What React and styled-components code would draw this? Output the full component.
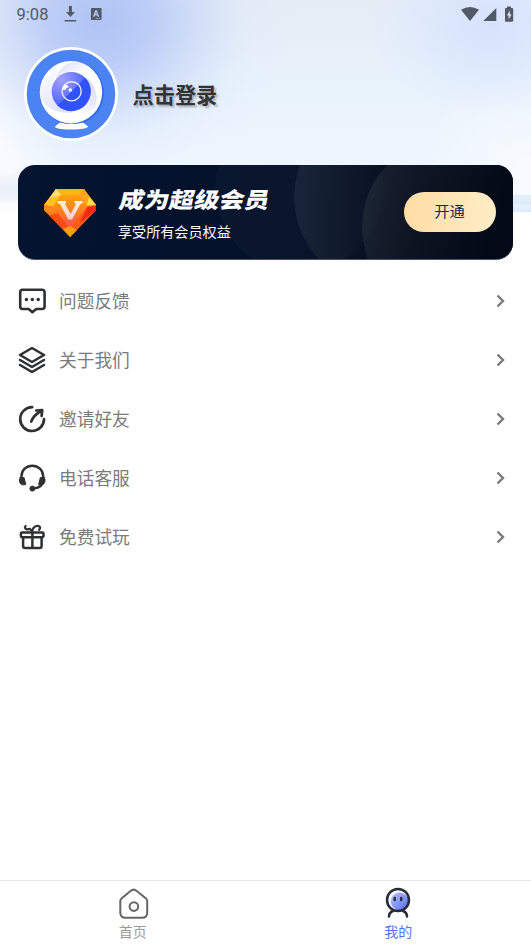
import React from "react";
import styled, { createGlobalStyle } from "styled-components";

const GlobalStyle = createGlobalStyle`
  * { box-sizing: border-box; }
  body {
    margin: 0;
    background: #fff;
    font-family: "Noto Sans CJK SC", "Noto Sans", sans-serif;
  }
`;

const Screen = styled.div`
  width: 531px;
  height: 944px;
  display: flex;
  flex-direction: column;
  overflow: hidden;
  background-color: #fff;
  background-repeat: no-repeat;
  background-position: 0 0, 513px 195px, 0 0, 0 0, 0 0, 0 0, 0 0;
  background-size: 18px 212px, 18px 17px, 531px 212px, 531px 212px, 531px 212px, 531px 212px, 531px 212px;
  background-image:
    linear-gradient(to bottom, transparent 172px, rgba(231, 236, 247, 0.85) 188px, rgba(240, 243, 250, 0.9) 200px, #fbfcfe 203px, #fdfdff 212px),
    linear-gradient(to bottom, #e3effa, #dfecf8 9px, #e7f2fc 11px, #dbeafa),
    radial-gradient(ellipse 200px 170px at 100px 22px, rgba(174, 193, 245, 0.95), rgba(177, 196, 246, 0.8) 25%, rgba(190, 206, 248, 0.5) 48%, rgba(208, 221, 250, 0.2) 70%, rgba(220, 230, 250, 0.05) 88%, transparent),
    radial-gradient(ellipse 120px 90px at 490px 25px, rgba(213, 225, 254, 0.9), rgba(216, 228, 254, 0.6) 45%, transparent),
    radial-gradient(ellipse 110px 100px at 531px 170px, rgba(255, 255, 255, 0.65), transparent),
    radial-gradient(ellipse 70px 190px at 0 140px, rgba(255, 255, 255, 0.7), transparent),
    linear-gradient(to bottom, #e5edf6, #e9f3fc 90px, #edf5fe 150px, #f1f7fe 212px);
`;

const StatusBar = styled.header`
  flex: none;
  height: 28px;
  display: flex;
  justify-content: space-between;
  padding: 0 17px 0 16px;
  color: #535966;
`;

const StatusGroup = styled.div`
  display: flex;
  align-items: center;
  gap: ${(p) => p.$gap}px;
`;

const Clock = styled.span`
  width: 34px;
  font: 400 16.5px/28px Roboto, sans-serif;
  padding: 2px 0 0 0.6px;
`;

const Glyph = styled.svg`
  display: block;
  flex: none;
  width: ${(p) => p.$w}px;
  height: ${(p) => p.$h}px;
  overflow: visible;
`;

const Profile = styled.section`
  flex: none;
  height: 137px;
  padding: 19px 24px 0;
  display: flex;
  align-items: flex-start;
  gap: 14.5px;
`;

const LoginLabel = styled.h1`
  margin: 0;
  padding-top: 31px;
  font-size: 21.2px;
  line-height: 32px;
  font-weight: 700;
  color: #333;
  text-shadow: 2px 2px 2px rgba(0, 0, 0, 0.26);
`;

const MemberCard = styled.section`
  flex: none;
  width: 495px;
  height: 95px;
  margin-left: 18px;
  padding: 0 17.5px 0 25px;
  border-radius: 17px;
  display: flex;
  align-items: flex-start;
  overflow: hidden;
  border-bottom: 1px solid #4c5366;
  background:
    linear-gradient(110deg, transparent 68%, rgba(1, 8, 20, 0.9) 95%),
    radial-gradient(circle at 434px 62px, rgba(255, 255, 255, 0.07) 89.5px, transparent 90px),
    linear-gradient(90deg, transparent 285px, rgba(1, 11, 28, 0.95) 400px),
    radial-gradient(circle at 367px 32px, rgba(255, 255, 255, 0.06) 90.5px, transparent 91px),
    radial-gradient(circle at 281px 24px, rgba(255, 255, 255, 0.022) 83.5px, transparent 84px),
    linear-gradient(100deg, #041431 0%, #031028 55%, #010916 80%, #010713 100%);
`;

const DiamondSlot = styled.div`
  padding-top: 23px;
`;

const CardCopy = styled.div`
  margin-left: 21px;
  flex: 1;
  display: flex;
  flex-direction: column;
  align-items: flex-start;
  color: #fff;
`;

const CardTitle = styled.h2`
  margin: 15px 0 0 2px;
  font-size: 25px;
  line-height: 36px;
  font-weight: 900;
  white-space: nowrap;
  transform: skewX(-12deg) scaleY(0.88);
`;

const CardSubtitle = styled.p`
  margin: 4px 0 0;
  font-size: 14.1px;
  line-height: 22px;
`;

const OpenButton = styled.button`
  margin: 27px 0 0;
  padding: 0 0 3px;
  width: 92px;
  height: 40px;
  border: 0;
  border-radius: 20px;
  color: #14285a;
  font: 400 15.3px/37px "Noto Sans CJK SC", sans-serif;
  background: linear-gradient(100deg, #ffdca4, #ffedc7);
`;

const Menu = styled.nav`
  flex: 1;
  padding: 11px 25px 0 18px;
`;

const MenuRow = styled.div`
  height: 59px;
  display: flex;
  align-items: center;
`;

const MenuText = styled.span`
  flex: 1;
  margin-left: 12px;
  padding-bottom: 2px;
  font-size: 17.7px;
  line-height: 28px;
  font-weight: 400;
  color: #7b7b7b;
`;

const TabBar = styled.footer`
  flex: none;
  height: 64px;
  border-top: 1px solid #e8e8e8;
  display: flex;
`;

const Tab = styled.div`
  flex: 1;
  display: flex;
  flex-direction: column;
  align-items: center;
  padding-top: 7px;
  color: ${(p) => (p.$active ? "#5573f8" : "#999")};
`;

const TabText = styled.span`
  margin-top: 1px;
  font-size: 14px;
  line-height: 20px;
`;

const Avatar = () => (
  <Glyph $w={94} $h={94} viewBox="0 0 94 94">
    <defs>
      <radialGradient id="iris" cx=".25" cy=".2" r=".65">
        <stop offset="0" stopColor="#a29ffb" />
        <stop offset="1" stopColor="#4b65fb" />
      </radialGradient>
      <linearGradient id="bladeTop" x1="0" y1="0" x2="1" y2=".6">
        <stop offset="0" stopColor="#d7d9fa" />
        <stop offset=".7" stopColor="#fff" />
      </linearGradient>
      <linearGradient id="bladeLow" x1="0" y1="0" x2=".6" y2="1">
        <stop offset="0" stopColor="#fff" />
        <stop offset="1" stopColor="#d6d9fa" />
      </linearGradient>
      <linearGradient id="bladeRight" x1="0" y1="1" x2=".5" y2="0">
        <stop offset="0" stopColor="#fff" />
        <stop offset="1" stopColor="#dadcfa" />
      </linearGradient>
    </defs>
    <circle cx="47" cy="47" r="47" fill="#fff" />
    <circle cx="47" cy="47" r="44.3" fill="#4b83f2" />
    <circle cx="48" cy="46" r="31.8" fill="#2c68ef" />
    <circle cx="47" cy="45.2" r="31.2" fill="#fff" />
    <path d="M31 38C31 26 38 17 51 14.5C64 17 74 26 77 38C69 27 60 23 49 24C39 25 33 30 31 38Z" fill="url(#bladeTop)" />
    <path d="M16 49C19 57 25 62 33 64C39 66 45 66 51 65C40 63 31 57 29 46C28 36 31 27 36 22C22 27 15 36 16 49Z" fill="url(#bladeLow)" opacity=".8" />
    <path d="M63 31C72 38 75 52 71 61C65 66 58 68 50 68C60 64 68 51 63 31Z" fill="url(#bladeRight)" />
    <circle cx="47.3" cy="44.6" r="19.6" fill="url(#iris)" />
    <path d="M61.2 30.8A19.6 19.6 0 0 1 33.5 58.5Z" fill="#3052ff" />
    <circle cx="47.6" cy="44.3" r="9.6" fill="none" stroke="#e8eaff" strokeWidth="1.4" />
    <circle cx="46.3" cy="43" r="1.7" fill="#fff" />
    <path d="M38.6 42.5q.3-3.8 3.4-4.8q2 .1 2.8 2.6q-2.8 0-3.5 2.7Z" fill="#fff" />
    <path d="M36 75.5Q47 78.5 59 75.5L64 79.5Q63 82.5 47 82.5T31 79.5Z" fill="#fff" />
  </Glyph>
);

const Diamond = () => (
  <Glyph $w={54} $h={50} viewBox="0 0 54 50">
    <defs>
      <linearGradient id="gem" x1="0" y1="0" x2="1" y2="1">
        <stop offset="0" stopColor="#ffbd16" />
        <stop offset=".55" stopColor="#fb7519" />
        <stop offset="1" stopColor="#fb2b16" />
      </linearGradient>
      <linearGradient id="gemFace" x1="0" y1="0" x2="0" y2="1">
        <stop offset="0" stopColor="#ffa20e" />
        <stop offset=".6" stopColor="#fb7626" />
        <stop offset="1" stopColor="#fa4b62" />
      </linearGradient>
      <linearGradient id="gemV" x1="0" y1="0" x2="0" y2="1">
        <stop offset="0" stopColor="#fff4d7" />
        <stop offset="1" stopColor="#f0cdd0" />
      </linearGradient>
    </defs>
    <path d="M13 1H41L53 17V22L27 49L1 22V17Z" fill="url(#gem)" />
    <path d="M13 1H41L36 7H18Z" fill="#ffb512" />
    <path d="M13 1L18 7L10 19L1 17Z" fill="#ffbf25" />
    <path d="M13 1L18 7L7 10Z" fill="#ffde78" />
    <path d="M41 1L53 17L44 19L36 7Z" fill="#ffa51b" />
    <path d="M46 9L53 17L44 17Z" fill="#ffe04d" />
    <path d="M1 17L10 19L27 40V49L1 22Z" fill="#fb4c15" />
    <path d="M1 17L10 19L15 25L7 27L1 22Z" fill="#ff861c" />
    <path d="M53 17L44 19L27 40V49L53 22Z" fill="#ff5c13" />
    <path d="M44 19L53 18V22L37 35Z" fill="#ff2617" />
    <path d="M10 19L18 7H36L44 19L27 40Z" fill="url(#gemFace)" />
    <path d="M20 41L27 38L34 42L27 49Z" fill="#ff9e14" />
    <path d="M14.5 13H23V15.3L22 15.8L27.7 26L33 15.8L31.5 15.3V13H39.5V15.3L37.5 16L29 31.5H25.3L17 16L14.5 15.3Z" fill="url(#gemV)" />
  </Glyph>
);

const icons = {
  feedback: (
    <g fill="none" stroke="#303133" strokeWidth="2.6" strokeLinejoin="round" strokeLinecap="round">
      <path d="M4 2.8H24Q26.6 2.8 26.6 5.3V19.5Q26.6 22 24 22H18.2L14.4 25.2L10.6 22H4.5Q2.2 22 2.2 19.5V5.3Q2.2 2.8 4.5 2.8Z" />
      <path d="M8.4 12.5h.01M14.3 12.5h.01M20.2 12.5h.01" strokeWidth="3.5" />
    </g>
  ),
  about: (
    <g fill="none" stroke="#303133" strokeWidth="2.6" strokeLinejoin="round" strokeLinecap="round">
      <path d="M14 2L26 9L14 16L2 9Z" />
      <path d="M2 14L14 21L26 14M2 19L14 26L26 19" />
    </g>
  ),
  invite: (
    <g fill="none" stroke="#303133" strokeWidth="2.7" strokeLinecap="round" strokeLinejoin="round">
      <path d="M14.2 2.2A11.9 11.9 0 1 0 26 14.2" />
      <path d="M13.2 16.5Q15.5 10.5 22.8 6" />
      <path d="M18.2 5.5L24.2 5L23.6 11" />
    </g>
  ),
  phone: (
    <g fill="none" stroke="#303133" strokeWidth="2.4" strokeLinecap="round">
      <path d="M3.5 15V12A10.8 10.3 0 0 1 25.1 12V16Q25 23.5 15.5 24.6" />
      <path d="M2.2 13.5H6L7.8 20.5Q3 21.8 1.8 18.5Q.7 15.5 2.2 13.5ZM26.3 13.5H22.4L20.6 20.5Q25.4 21.8 26.7 18.5Q27.7 15.5 26.3 13.5Z" fill="#303133" strokeWidth="1" />
      <circle cx="14.4" cy="24.6" r="2.5" fill="#303133" strokeWidth="1" />
    </g>
  ),
  trial: (
    <g fill="none" stroke="#303133" strokeWidth="2.5" strokeLinejoin="round" strokeLinecap="round">
      <rect x="2.9" y="9.4" width="22.6" height="4.8" rx="1.2" />
      <path d="M5.1 14.6V23Q5.1 25 7.1 25H21.6Q23.6 25 23.6 23V14.6M14.4 10V25" />
      <path d="M14.3 8.8Q14.4 4.4 18.4 3C21.8 2.2 23.2 5 21 6.8M13.2 7.5Q11.8 4.8 10.2 6.4C7.2 6.4 6 4.5 7.6 3" strokeWidth="2.2" />
    </g>
  ),
};

const items = [
  ["feedback", "问题反馈"],
  ["about", "关于我们"],
  ["invite", "邀请好友"],
  ["phone", "电话客服"],
  ["trial", "免费试玩"],
];

export default function App() {
  return (
    <>
      <GlobalStyle />
      <Screen>
        <StatusBar>
          <StatusGroup $gap={14}>
            <Clock>9:08</Clock>
            <Glyph $w={12} $h={16} viewBox="0 0 12 16">
              <path d="M4.9 0h3v6H11L6.4 11 2 6H4.9ZM.6 14h11.6v1.5H.6Z" fill="currentColor" />
            </Glyph>
            <Glyph $w={12} $h={12} viewBox="0 0 12 12">
              <path fillRule="evenodd" d="M1.9 0H10.6q1 0 1 1v10q0 1-1 1H1.9q-1 0-1-1V1q0-1 1-1M5.3 2.2L2.9 8.7H4.4l.5-1.3h2.3L7.6 8.7h1.6L6.8 2.2ZM5.4 6.2l.7-2 .7 2ZM6.3 10v1H7.5v-1ZM8.7 10v1h1.2v-1Z" fill="currentColor" />
            </Glyph>
          </StatusGroup>
          <StatusGroup $gap={4}>
            <Glyph $w={18} $h={14} viewBox="0 0 18 14">
              <path d="M-1 2.7Q8-2.7 17 2.7L8 14Z" fill="currentColor" />
            </Glyph>
            <Glyph $w={13} $h={14} viewBox="0 0 13 14">
              <path d="M12.3 1V14H-.7Z" fill="currentColor" />
            </Glyph>
            <Glyph $w={13} $h={15} viewBox="0 0 13 15">
              <path fillRule="evenodd" d="M6 -.5h4v1.5h1.2q1 0 1 1V13.7q0 1-1 1H5q-1 0-1-1V2q0-1 1-1h1ZM8.8 3.5L5.9 8.5h1.7v4l3-5.2H8.8Z" fill="currentColor" />
            </Glyph>
          </StatusGroup>
        </StatusBar>
        <Profile>
          <Avatar />
          <LoginLabel>点击登录</LoginLabel>
        </Profile>
        <MemberCard>
          <DiamondSlot>
            <Diamond />
          </DiamondSlot>
          <CardCopy>
            <CardTitle>成为超级会员</CardTitle>
            <CardSubtitle>享受所有会员权益</CardSubtitle>
          </CardCopy>
          <OpenButton>开通</OpenButton>
        </MemberCard>
        <Menu>
          {items.map(([icon, label]) => (
            <MenuRow key={icon}>
              <Glyph $w={29} $h={28} viewBox="0 0 29 28">{icons[icon]}</Glyph>
              <MenuText>{label}</MenuText>
              <Glyph $w={10} $h={14} viewBox="0 0 10 14">
                <path d="M1.5 1.5L7 7L1.5 12.5" fill="none" stroke="#7a7a7a" strokeWidth="2.4" />
              </Glyph>
            </MenuRow>
          ))}
        </Menu>
        <TabBar>
          <Tab>
            <Glyph $w={32} $h={32} viewBox="0 0 32 32">
              <g fill="none" stroke="#666" strokeWidth="2">
                <path d="M3.3 13Q3.3 11.5 4.5 10.4L13.5 3Q16.7.3 19.8 3L29 10.4Q30.2 11.5 30.2 13V24.5Q30.2 29.8 24.9 29.8H8.6Q3.3 29.8 3.3 24.5Z" />
                <circle cx="16.9" cy="18.6" r="4.3" />
              </g>
            </Glyph>
            <TabText>首页</TabText>
          </Tab>
          <Tab $active>
            <Glyph $w={32} $h={32} viewBox="0 0 32 32">
              <defs>
                <linearGradient id="face" x1="0" y1="0" x2="1" y2="1">
                  <stop stopColor="#b7c4ff" />
                  <stop offset="1" stopColor="#5369f5" />
                </linearGradient>
              </defs>
              <circle cx="16" cy="12" r="10.8" fill="#f4f6ff" />
              <circle cx="17.6" cy="13.4" r="8.8" fill="url(#face)" />
              <circle cx="16" cy="12" r="11" fill="none" stroke="#292b35" strokeWidth="2.5" />
              <path d="M12.7 10v2M19.2 10v2M11 23Q7 24.5 7 28.5M21 23Q25 24.5 25 28.5" fill="none" stroke="#292b35" strokeWidth="2.5" strokeLinecap="round" />
            </Glyph>
            <TabText>我的</TabText>
          </Tab>
        </TabBar>
      </Screen>
    </>
  );
}
